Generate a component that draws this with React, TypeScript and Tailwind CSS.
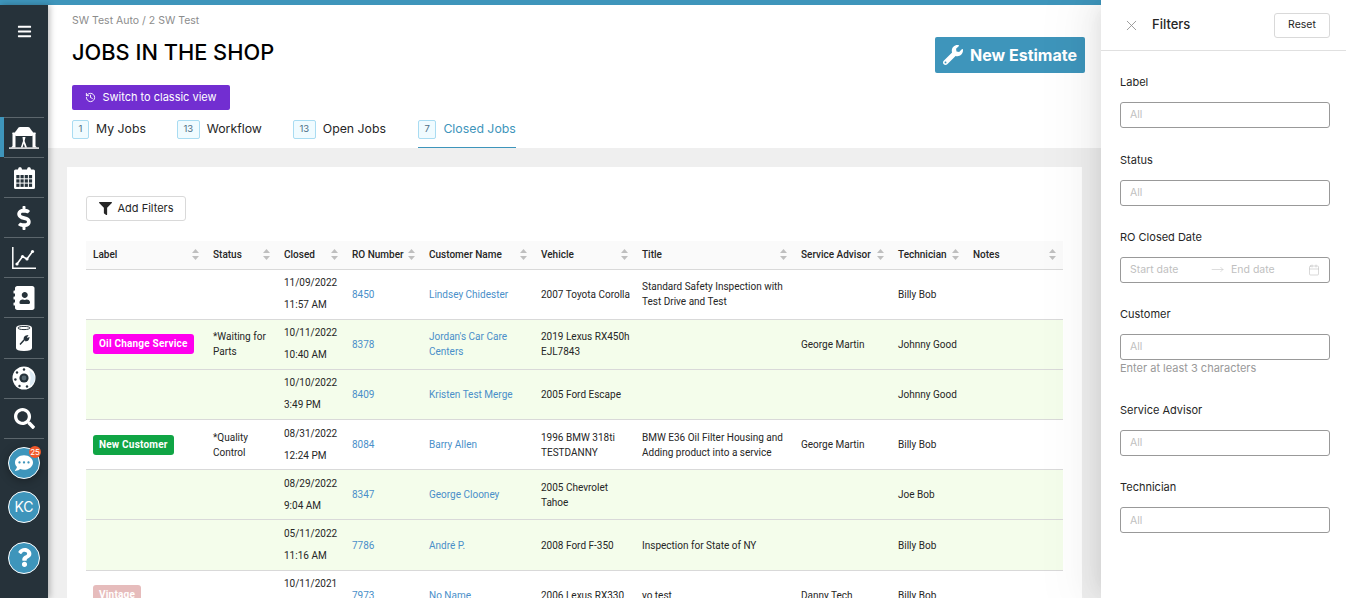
import type { ReactNode } from 'react';
import { Calendar, History, MoveRight, X } from 'lucide-react';
import {
  FaAddressBook,
  FaBars,
  FaCommentDots,
  FaDollarSign,
  FaFilter,
  FaQuestion,
  FaSearch,
  FaWrench,
} from 'react-icons/fa';

const COLUMNS = [
  { name: 'Label', width: 120 },
  { name: 'Status', width: 71 },
  { name: 'Closed', width: 68 },
  { name: 'RO Number', width: 77 },
  { name: 'Customer Name', width: 112 },
  { name: 'Vehicle', width: 101 },
  { name: 'Title', width: 159 },
  { name: 'Service Advisor', width: 97 },
  { name: 'Technician', width: 75 },
  { name: 'Notes', width: 97 },
];

type Job = {
  label?: { text: string; className: string };
  status?: string;
  date: string;
  time: string;
  ro: string;
  customer: string;
  vehicle: string;
  title?: string;
  advisor?: string;
  tech: string;
  green?: boolean;
};

const JOBS: Job[] = [
  {
    date: '11/09/2022',
    time: '11:57 AM',
    ro: '8450',
    customer: 'Lindsey Chidester',
    vehicle: '2007 Toyota Corolla',
    title: 'Standard Safety Inspection with Test Drive and Test',
    tech: 'Billy Bob',
  },
  {
    label: { text: 'Oil Change Service', className: 'bg-[#ff00ee]' },
    status: '*Waiting for Parts',
    date: '10/11/2022',
    time: '10:40 AM',
    ro: '8378',
    customer: "Jordan's Car Care Centers",
    vehicle: '2019 Lexus RX450h EJL7843',
    advisor: 'George Martin',
    tech: 'Johnny Good',
    green: true,
  },
  {
    date: '10/10/2022',
    time: '3:49 PM',
    ro: '8409',
    customer: 'Kristen Test Merge',
    vehicle: '2005 Ford Escape',
    tech: 'Johnny Good',
    green: true,
  },
  {
    label: { text: 'New Customer', className: 'bg-[#10a545]' },
    status: '*Quality Control',
    date: '08/31/2022',
    time: '12:24 PM',
    ro: '8084',
    customer: 'Barry Allen',
    vehicle: '1996 BMW 318ti TESTDANNY',
    title: 'BMW E36 Oil Filter Housing and Adding product into a service',
    advisor: 'George Martin',
    tech: 'Billy Bob',
  },
  {
    date: '08/29/2022',
    time: '9:04 AM',
    ro: '8347',
    customer: 'George Clooney',
    vehicle: '2005 Chevrolet Tahoe',
    tech: 'Joe Bob',
    green: true,
  },
  {
    date: '05/11/2022',
    time: '11:16 AM',
    ro: '7786',
    customer: 'André P.',
    vehicle: '2008 Ford F-350',
    title: 'Inspection for State of NY',
    tech: 'Billy Bob',
    green: true,
  },
  {
    label: { text: 'Vintage', className: 'bg-[#e6bcbc]' },
    date: '10/11/2021',
    time: '4:21 PM',
    ro: '7973',
    customer: 'No Name',
    vehicle: '2006 Lexus RX330',
    title: 'yo test',
    advisor: 'Danny Tech',
    tech: 'Billy Bob',
  },
];

function LiftIcon() {
  return (
    <svg viewBox="0 0 30 22" className="h-[22px] w-[30px]" fill="white">
      <rect x="0" y="20.4" width="30" height="1.4" />
      <path d="M3.5 6 H6.5 V20.4 H2 L3.5 19 Z" />
      <path d="M23.5 6 H26.5 V19 L28 20.4 H23.5 Z" />
      <rect x="3.5" y="5.5" width="23" height="1.5" />
      <path d="M7 4 L9.5 .6 Q10 0 11 0 H19 Q20 0 20.5 .6 L23 4 Q24 4.5 24 6 V8 Q24 9 23 9 H7 Q6 9 6 8 V6 Q6 4.5 7 4 Z" />
      <path d="M13.5 10 H16.5 L15.6 14 L18 20.4 H16 L14.8 16.5 L13.5 20.4 H11.8 L14 14 Z" />
    </svg>
  );
}

function CalendarIcon() {
  const cells = [];
  for (let row = 0; row < 3; row++) {
    for (let col = 0; col < 4; col++) {
      cells.push(<rect key={`${row}-${col}`} x={2.3 + col * 4.2} y={8 + row * 4.3} width="3.2" height="3.3" fill="#26323a" />);
    }
  }
  return (
    <svg viewBox="0 0 21 22" className="h-[22px] w-[21px]" fill="white">
      <path d="M1.5 2.5 H4 Q4 0 6 0 Q8 0 8 2.5 H13 Q13 0 15 0 Q17 0 17 2.5 H19.5 Q21 2.5 21 4 V20.5 Q21 22 19.5 22 H1.5 Q0 22 0 20.5 V4 Q0 2.5 1.5 2.5 Z" />
      {cells}
    </svg>
  );
}

function ChartIcon() {
  return (
    <svg viewBox="0 0 24 22" className="h-[22px] w-[24px]" fill="white" stroke="white">
      <path d="M.8 0 V21.2 H24" fill="none" strokeWidth="1.5" />
      <path d="M5 17 L10.5 9.5 L15 12 L20.5 4.5" fill="none" strokeWidth="1.6" />
      <circle cx="5" cy="17" r="1.6" strokeWidth="0" />
      <circle cx="10.5" cy="9.5" r="1.6" strokeWidth="0" />
      <circle cx="15" cy="12" r="1.6" strokeWidth="0" />
      <circle cx="20.5" cy="4.5" r="1.6" strokeWidth="0" />
    </svg>
  );
}

function FilterIcon() {
  return (
    <svg viewBox="0 0 16 26" className="h-[26px] w-[16px]">
      <path d="M0 3 Q0 0 8 0 Q16 0 16 3 V23 Q16 26 8 26 Q0 26 0 23 Z" fill="white" />
      <ellipse cx="8" cy="3" rx="6" ry="1.6" fill="none" stroke="#26323a" strokeWidth="1" />
      <path d="M4 19.5 L9 14 M8.4 14.6 Q8 11.6 11 11 L10 12.6 L11 13.8 L12.6 13.2 Q12 16 9.2 15.4" stroke="#26323a" strokeWidth="1.5" fill="#26323a" />
    </svg>
  );
}

function DiscIcon() {
  return (
    <svg viewBox="0 0 24 24" className="h-[24px] w-[24px]">
      <circle cx="12" cy="12" r="11.5" fill="white" />
      <circle cx="12" cy="12" r="4.6" fill="#26323a" />
      <circle cx="12" cy="12" r="2.4" fill="#55666f" />
      <circle cx="12" cy="3.5" r="1.2" fill="#26323a" />
      <circle cx="5" cy="6.5" r="1.2" fill="#26323a" />
      <circle cx="3.4" cy="13.5" r="1.2" fill="#26323a" />
      <circle cx="7.5" cy="20" r="1.2" fill="#26323a" />
      <circle cx="15" cy="20.5" r="1.2" fill="#26323a" />
      <path d="M17 4 Q23 8 23 12 Q23 17 18 20 L18 16 Q19.5 12 18 8 Z" fill="#dcebf5" />
    </svg>
  );
}

function NavItem({ children, active }: { children: ReactNode; active?: boolean }) {
  return (
    <div className={active ? 'border-l-4 border-[#3e95bb] pr-1' : 'px-1'}>
      <div className="flex h-[40.1px] items-center justify-center border-t border-[#5c666c] text-white">
        {children}
      </div>
    </div>
  );
}

function RoundButton({ children, className }: { children: ReactNode; className: string }) {
  return (
    <div
      className={`relative flex h-[32px] w-[32px] items-center justify-center rounded-full border border-white bg-[#3e95bb] text-white ${className}`}
    >
      {children}
    </div>
  );
}

function Sidebar() {
  return (
    <aside className="relative z-[1] flex w-[48px] shrink-0 flex-col bg-[#26323a] shadow-[2px_0_6px_rgba(0,0,0,0.25)]">
      <div className="flex h-[112px] shrink-0 justify-center pt-[19px] text-white">
        <FaBars size={15} />
      </div>
      <NavItem active>
        <LiftIcon />
      </NavItem>
      <NavItem>
        <CalendarIcon />
      </NavItem>
      <NavItem>
        <FaDollarSign size={24} />
      </NavItem>
      <NavItem>
        <ChartIcon />
      </NavItem>
      <NavItem>
        <FaAddressBook size={24} className="-scale-x-100" />
      </NavItem>
      <NavItem>
        <FilterIcon />
      </NavItem>
      <NavItem>
        <DiscIcon />
      </NavItem>
      <NavItem>
        <FaSearch size={21} />
      </NavItem>
      <div className="mx-1 border-t border-[#5c666c]" />
      <div className="flex flex-col items-center">
        <RoundButton className="mt-[8px] shadow-[0_2px_10px_rgba(0,0,0,0.3)]">
          <FaCommentDots size={18} />
          <span className="absolute -right-[2px] -top-[2px] flex h-[12px] w-[12px] items-center justify-center rounded-full bg-[#f2592a] text-[8px] leading-none text-white">
            25
          </span>
        </RoundButton>
        <RoundButton className="mt-[12px] text-[14px]">KC</RoundButton>
        <RoundButton className="mt-[19px]">
          <FaQuestion size={19} />
        </RoundButton>
      </div>
    </aside>
  );
}

function Tab({ count, name, active, className }: { count: number; name: string; active?: boolean; className: string }) {
  return (
    <div className={`flex h-[28px] items-start gap-[7px] ${active ? 'border-b border-[#3e95bb]' : ''} ${className}`}>
      <span className="flex h-[19px] min-w-[17px] items-center justify-center rounded-[2px] border border-[#a9dcf2] bg-[#f0fbff] px-[5.5px] text-[9.5px] text-[#4d6f85]">
        {count}
      </span>
      <span className={`text-[12.3px] leading-[17px] ${active ? 'text-[#3e95bb]' : 'text-[#262626]'}`}>{name}</span>
    </div>
  );
}

function SortCarets() {
  return (
    <svg viewBox="0 0 7 11" className="h-[11px] w-[7px] shrink-0" fill="#bfbfbf">
      <path d="M3.5 0 L7 4 H0 Z" />
      <path d="M3.5 11 L0 7 H7 Z" />
    </svg>
  );
}

function JobsTable() {
  return (
    <table className="w-[977px] table-fixed border-collapse font-['Roboto',sans-serif] text-[10px] text-[#262626]">
      <colgroup>
        {COLUMNS.map((c) => (
          <col key={c.name} style={{ width: c.width }} />
        ))}
      </colgroup>
      <thead>
        <tr className="h-[28px] border-b border-[#d9d9d9] bg-[#fafafa]">
          {COLUMNS.map((c) => (
            <th key={c.name} className="px-[7px] text-left font-medium">
              <div className="flex items-center justify-between whitespace-nowrap">
                {c.name}
                <SortCarets />
              </div>
            </th>
          ))}
        </tr>
      </thead>
      <tbody>
        {JOBS.map((job) => (
          <tr key={job.ro} className={`h-[50.2px] border-b border-[#d9d9d9] ${job.green ? 'bg-[#f4fdeb]' : ''}`}>
            <td className="px-[7px]">
              {job.label && (
                <span className={`inline-block h-[20px] whitespace-nowrap rounded-[3px] px-[6px] font-bold leading-[20px] tracking-[0.2px] text-white ${job.label.className}`}>
                  {job.label.text}
                </span>
              )}
            </td>
            <td className="px-[7px] leading-[15px]">{job.status}</td>
            <td className="whitespace-nowrap px-[7px] leading-[22px]">
              {job.date}
              <br />
              {job.time}
            </td>
            <td className="px-[7px] text-[#4a8fc9]">{job.ro}</td>
            <td className="px-[7px] leading-[15px] text-[#4a8fc9]">{job.customer}</td>
            <td className="pl-[7px] pr-0 leading-[15px]">{job.vehicle}</td>
            <td className="px-[7px] leading-[15px]">{job.title}</td>
            <td className="px-[7px]">{job.advisor}</td>
            <td className="px-[7px]">{job.tech}</td>
            <td className="px-[7px]" />
          </tr>
        ))}
      </tbody>
    </table>
  );
}

function Field({ label, hint, children }: { label: string; hint?: string; children?: ReactNode }) {
  return (
    <div className="mb-[21.35px]">
      <div className="mb-[10px] text-[11px] leading-[20px] text-[#262626]">{label}</div>
      <div className="flex h-[26px] items-center rounded-[3px] border border-[#999] px-[9px] text-[10.5px] text-[#bfbfbf]">
        {children ?? 'All'}
      </div>
      {hint && <div className="pb-[2.5px] pt-[1px] text-[11px] leading-[15px] text-[#999]">{hint}</div>}
    </div>
  );
}

function FiltersDrawer() {
  return (
    <aside className="relative z-10 flex w-[245px] shrink-0 flex-col bg-white shadow-[-6px_0_16px_-8px_rgba(0,0,0,0.08),-9px_0_28px_0_rgba(0,0,0,0.05),-12px_0_48px_16px_rgba(0,0,0,0.03)]">
      <div className="flex h-[51px] shrink-0 items-center border-b border-[#e0e0e0] pl-[22px] pr-[16px]">
        <X size={17} strokeWidth={1.2} className="text-[#8c8c8c]" />
        <span className="ml-[12px] text-[13px] font-medium text-[#262626]">Filters</span>
        <button className="ml-auto h-[25px] w-[56px] rounded-[3px] border border-[#d9d9d9] text-[10.5px] text-[#262626]">
          Reset
        </button>
      </div>
      <div className="pl-[19px] pr-[16px] pt-[21.2px]">
        <Field label="Label" />
        <Field label="Status" />
        <Field label="RO Closed Date">
          <span className="w-[81px]">Start date</span>
          <MoveRight size={13} strokeWidth={1} className="text-[#bfbfbf]" />
          <span className="ml-[7px]">End date</span>
          <Calendar size={12} strokeWidth={1.2} className="ml-auto text-[#bfbfbf]" />
        </Field>
        <Field label="Customer" hint="Enter at least 3 characters" />
        <Field label="Service Advisor" />
        <Field label="Technician" />
      </div>
    </aside>
  );
}

export default function App() {
  return (
    <div className="flex h-[598px] w-[1346px] overflow-hidden bg-white font-['Inter','Liberation_Sans',sans-serif]">
      <div className="flex min-w-0 flex-1 flex-col">
        <div className="h-[5px] shrink-0 bg-[#3e95bb]" />
        <div className="flex min-h-0 flex-1">
          <Sidebar />
          <main className="flex min-w-0 flex-1 flex-col bg-[#efefef]">
            <header className="h-[143px] shrink-0 bg-white pl-[24px] pr-[16px]">
              <div className="pt-[9px] text-[10.5px] leading-[14px] text-[#8c8c8c]">SW Test Auto / 2 SW Test</div>
              <div className="flex h-[49px] items-start justify-between">
                <h1 className="mt-[9px] text-[21.8px] font-medium leading-[30px] text-black">JOBS IN THE SHOP</h1>
                <button className="mt-[9px] flex h-[36px] w-[150px] items-center justify-center gap-[7px] rounded-[2px] bg-[#3e95bb] text-[16px] font-bold leading-[38px] text-white">
                  <FaWrench size={20} />
                  New Estimate
                </button>
              </div>
              <button className="mt-[8px] flex h-[25px] w-[158px] items-center justify-center gap-[6px] rounded-[2px] bg-[#722ed1] text-[11px] text-white">
                <History size={11} />
                Switch to classic view
              </button>
              <div className="mt-[10px] flex">
                <Tab count={1} name="My Jobs" className="w-[105px]" />
                <Tab count={13} name="Workflow" className="w-[116px]" />
                <Tab count={13} name="Open Jobs" className="w-[125px]" />
                <Tab count={7} name="Closed Jobs" active className="w-[98px]" />
              </div>
            </header>
            <div className="min-h-0 flex-1 px-[19px] pt-[19px]">
              <section className="h-[500px] bg-white px-[19px] pt-[29px]">
                <button className="flex h-[25px] w-[100px] items-center justify-center gap-[6px] rounded-[3px] border border-[#d9d9d9] text-[11px] text-[#262626]">
                  <FaFilter size={13} className="text-[#262626]" />
                  Add Filters
                </button>
                <div className="mt-[20px]">
                  <JobsTable />
                </div>
              </section>
            </div>
          </main>
        </div>
      </div>
      <FiltersDrawer />
    </div>
  );
}
